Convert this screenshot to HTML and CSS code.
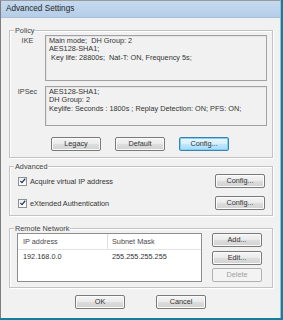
FILE: index.html
```html
<!DOCTYPE html>
<html>
<head>
<meta charset="utf-8">
<link rel="stylesheet" href="styles.css">
</head>
<body>
<div class="window">
  <div class="titlebar">Advanced Settings</div>
  <div class="client">
    <div class="group policy">
      <div class="legend">Policy</div>
      <div class="prow">
        <div class="plabel">IKE</div>
        <div class="tbox ike">Main mode;  DH Group: 2
AES128-SHA1;
 Key life: 28800s;  Nat-T: ON, Frequency 5s;</div>
      </div>
      <div class="prow second">
        <div class="plabel">IPSec</div>
        <div class="tbox ipsec">AES128-SHA1;
DH Group: 2
Keylife: Seconds : 1800s ; Replay Detection: ON; PFS: ON;</div>
      </div>
      <div class="pbuttons">
        <div class="btn">Legacy</div>
        <div class="btn">Default</div>
        <div class="btn focus">Config...</div>
      </div>
    </div>

    <div class="group advanced">
      <div class="legend">Advanced</div>
      <div class="arow">
        <div class="check"><svg width="8" height="8" viewBox="0 0 8 8"><path d="M1.5 4 L3.2 5.8 L6.6 1.6" fill="none" stroke="#21366e" stroke-width="1.3"/></svg></div>
        <div class="clabel">Acquire virtual IP address</div>
        <div class="btn small">Config...</div>
      </div>
      <div class="arow second">
        <div class="check"><svg width="8" height="8" viewBox="0 0 8 8"><path d="M1.5 4 L3.2 5.8 L6.6 1.6" fill="none" stroke="#21366e" stroke-width="1.3"/></svg></div>
        <div class="clabel">eXtended Authentication</div>
        <div class="btn small">Config...</div>
      </div>
    </div>

    <div class="group remote">
      <div class="legend">Remote Network</div>
      <div class="rrow">
        <div class="list">
          <div class="lhead">
            <div class="c1">IP address</div>
            <div class="c2">Subnet Mask</div>
          </div>
          <div class="lrow">
            <div class="c1">192.168.0.0</div>
            <div class="c2">255.255.255.255</div>
          </div>
        </div>
        <div class="rbuttons">
          <div class="btn">Add...</div>
          <div class="btn">Edit...</div>
          <div class="btn disabled">Delete</div>
        </div>
      </div>
    </div>

    <div class="footer">
      <div class="btn">OK</div>
      <div class="btn">Cancel</div>
    </div>
  </div>
</div>
</body>
</html>
```

FILE: styles.css
```css
html, body {
  margin: 0;
  padding: 0;
}
body {
  background: #137f9e;
  width: 283px;
  height: 320px;
  overflow: hidden;
  font-family: "Liberation Sans", Arial, sans-serif;
  font-size: 7.3px;
  color: #3a3a3a;
}
.window {
  width: 279px;
  height: 317px;
  border-left: 1px solid #7d7d7d;
  border-top: 1px solid #9a9a9a;
  border-right: 1px solid #a8b8c8;
  background: #f1f1f1;
  display: flex;
  flex-direction: column;
}
.titlebar {
  height: 16px;
  line-height: 16px;
  padding-left: 5px;
  font-size: 8.2px;
  color: #262626;
  background: linear-gradient(#c5daf0, #b5cde7);
  border-bottom: 1px solid #a9bfd8;
}
.client {
  display: flex;
  flex-direction: column;
  padding: 12px 0 0 8px;
}
.group {
  width: 262px;
  border: 1px solid #c3c3c3;
  box-shadow: inset 1px 1px 0 #ffffff, 1px 1px 0 #ffffff;
  display: flex;
  flex-direction: column;
}
.legend {
  margin: -5px 0 0 4px;
  padding: 0 1px;
  line-height: 9px;
  height: 9px;
  background: #f1f1f1;
  align-self: flex-start;
  color: #444444;
}
.policy {
  height: 126px;
}
.prow {
  display: flex;
}
.prow.second {
  margin-top: 5px;
}
.plabel {
  width: 35px;
  text-align: center;
  padding-top: 2px;
  line-height: 8.5px;
  color: #444444;
}
.tbox {
  width: 214px;
  border: 1px solid #a2a2a2;
  box-shadow: inset 1px 1px 0 #e4e4e4;
  padding: 1px 3px;
  line-height: 8.4px;
  white-space: pre;
  background: #f1f1f1;
  color: #333333;
}
.ike {
  height: 42px;
}
.ipsec {
  height: 36px;
}
.pbuttons {
  display: flex;
  gap: 14px;
  margin: 11px 0 0 41px;
}
.btn {
  width: 48px;
  height: 12px;
  border: 1px solid #7a7a7a;
  border-radius: 2px;
  background: linear-gradient(#f5f5f5 0%, #ebebeb 45%, #dcdcdc 55%, #d2d2d2 100%);
  box-shadow: inset 0 0 0 1px #fbfbfb;
  text-align: center;
  line-height: 12px;
  color: #333333;
  box-sizing: content-box;
}
.btn.focus {
  border-color: #3c7fb1;
  background: linear-gradient(#eaf6fd 0%, #d9f0fc 45%, #bee6fd 55%, #a7d9f5 100%);
  box-shadow: inset 0 0 0 1px #7ed3f5;
}
.btn.disabled {
  border-color: #b0b0b0;
  background: #f3f3f3;
  color: #a0a0a0;
  box-shadow: none;
}
.advanced {
  margin-top: 8px;
  height: 48px;
}
.arow {
  display: flex;
  align-items: center;
  margin-top: 3px;
  height: 14px;
}
.arow.second {
  margin-top: 8px;
}
.check {
  width: 7px;
  height: 7px;
  border: 1px solid #8e8f8f;
  background: linear-gradient(#f0f0f0, #ffffff);
  margin-left: 8px;
  display: flex;
}
.check svg {
  margin: -1px 0 0 -0.5px;
}
.clabel {
  margin-left: 3px;
  flex: 1;
  color: #333333;
}
.btn.small {
  margin-right: 7px;
  height: 12px;
}
.remote {
  margin-top: 12px;
  height: 58px;
}
.rrow {
  display: flex;
}
.list {
  margin-left: 7px;
  width: 183px;
  height: 47px;
  border: 1px solid #8e8e8e;
  background: #ffffff;
}
.lhead {
  display: flex;
  height: 15px;
  line-height: 15px;
  border-bottom: 1px solid #e5e5e5;
  color: #4a4a4a;
}
.lhead .c1 {
  border-right: 1px solid #e0e0e0;
}
.c1 {
  width: 84px;
  padding-left: 5px;
}
.c2 {
  padding-left: 4px;
}
.lrow {
  display: flex;
  height: 14px;
  line-height: 14px;
  color: #333333;
}
.lrow .c1 {
  width: 85px;
}
.rbuttons {
  display: flex;
  flex-direction: column;
  margin-left: 10px;
}
.rbuttons .btn + .btn {
  margin-top: 4px;
}
.rbuttons .btn.disabled {
  margin-top: 3px;
}
.footer {
  display: flex;
  justify-content: center;
  gap: 31px;
  margin: 7px 0 0 -8px;
}
```
